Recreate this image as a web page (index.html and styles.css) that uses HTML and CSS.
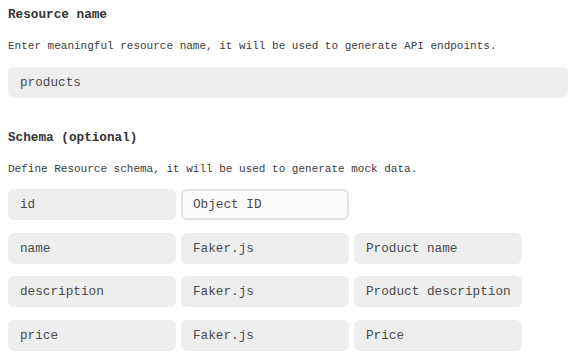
FILE: index.html
```html
<!DOCTYPE html>
<html lang="en">
<head>
    <meta charset="UTF-8">
    <title>New resource</title>
    <link rel="stylesheet" href="styles.css">
</head>

<body>
<div class="page">
    <div class="field-title">Resource name</div>
    <div class="field-hint">Enter meaningful resource name, it will be used to generate API endpoints.</div>
    <input class="input input-wide" type="text" value="products">

    <div class="field-title schema-title">Schema (optional)</div>
    <div class="field-hint">Define Resource schema, it will be used to generate mock data.</div>
    <div class="schema">
        <input class="input" type="text" value="id">
        <input class="input input-active" type="text" value="Object ID">
        <div></div>

        <input class="input" type="text" value="name">
        <input class="input" type="text" value="Faker.js">
        <input class="input" type="text" value="Product name">

        <input class="input" type="text" value="description">
        <input class="input" type="text" value="Faker.js">
        <input class="input" type="text" value="Product description">

        <input class="input" type="text" value="price">
        <input class="input" type="text" value="Faker.js">
        <input class="input" type="text" value="Price">
    </div>
</div>
</body>
</html>
```

FILE: styles.css
```css
body {
    background: #fff;
    margin: 0;
}

.page {
    font-family: "Liberation Mono", "DejaVu Sans Mono", monospace;
    padding: 7px 8px 0;
}

.field-title {
    color: #333;
    font-size: 12.7px;
    font-weight: 700;
    line-height: 16px;
}

.schema-title {
    margin-top: 32px;
}

.field-hint {
    color: #3c3c3c;
    font-size: 11px;
    line-height: 14px;
    margin-bottom: 14px;
    margin-top: 16px;
}

.input {
    background: #eee;
    border: 2px solid transparent;
    border-radius: 6px;
    box-sizing: border-box;
    color: #4a4a4a;
    display: block;
    font-family: inherit;
    font-size: 12.7px;
    height: 31px;
    margin: 0;
    outline: none;
    padding: 0 10px;
    width: 100%;
}

.input-wide {
    width: 560px;
}

.input-active {
    background: #fcfcfc;
    border-color: #e4e4e4;
}

.schema {
    display: grid;
    grid-template-columns: 168px 168px 168px;
    column-gap: 5px;
    row-gap: 12.5px;
    margin-top: -1px;
}
```
